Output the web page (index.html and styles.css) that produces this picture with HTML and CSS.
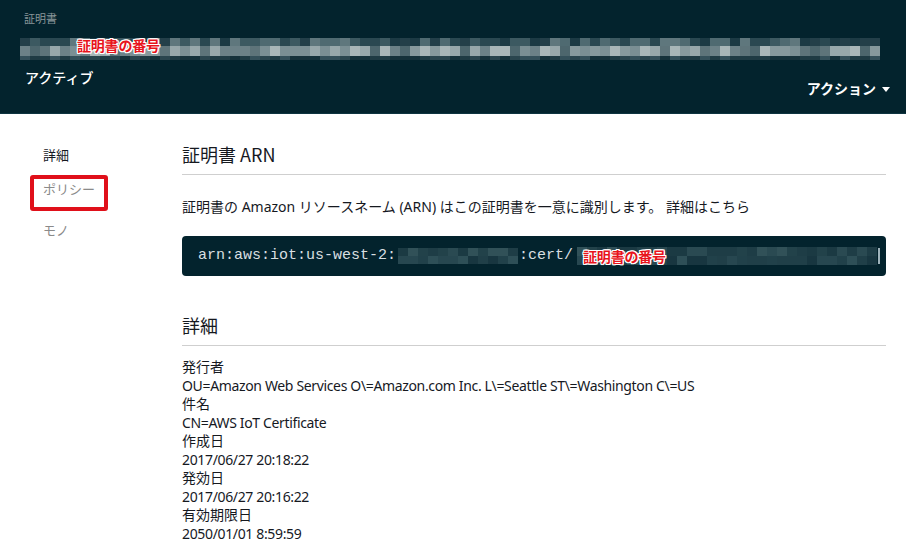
FILE: index.html
```html
<!DOCTYPE html>
<html lang="ja">
<head>
<meta charset="utf-8">
<title>証明書</title>
<link rel="stylesheet" href="styles.css">
</head>
<body>
<header class="header">
  <div class="crumb">証明書</div>
  <div class="mosaic-wrap">
    <div class="mosaic header-mosaic" data-cols="86" data-rows="8,10,4" data-seed="7" data-pal="header"></div>
    <span class="redlabel header-label">証明書の番号</span>
  </div>
  <div class="title-row">
    <div class="status">アクティブ</div>
    <div class="actions">アクション <span class="caret"></span></div>
  </div>
</header>
<div class="page">
  <nav class="side">
    <a class="side-item active">詳細</a>
    <a class="side-item boxed">ポリシー</a>
    <a class="side-item">モノ</a>
  </nav>
  <main class="main">
    <section class="sec">
      <h2 class="sec-title">証明書 ARN</h2>
      <p class="desc">証明書の Amazon リソースネーム (ARN) はこの証明書を一意に識別します。 詳細はこちら</p>
      <div class="code">
        <span class="code-text">arn:aws:iot:us-west-2:</span>
        <div class="mosaic code-mosaic1" data-cols="12" data-rows="8,8" data-seed="3" data-pal="code"></div>
        <span class="code-text">:cert/</span>
        <div class="mosaic-wrap code-wrap2">
          <div class="mosaic code-mosaic2" data-cols="30" data-rows="9,9" data-seed="11" data-pal="code"></div>
          <span class="redlabel code-label">証明書の番号</span>
        </div>
        <span class="cursor"></span>
      </div>
    </section>
    <section class="sec sec2">
      <h2 class="sec-title">詳細</h2>
      <dl class="details">
        <dt>発行者</dt>
        <dd>OU=Amazon Web Services O\=Amazon.com Inc. L\=Seattle ST\=Washington C\=US</dd>
        <dt>件名</dt>
        <dd>CN=AWS IoT Certificate</dd>
        <dt>作成日</dt>
        <dd>2017/06/27 20:18:22</dd>
        <dt>発効日</dt>
        <dd>2017/06/27 20:16:22</dd>
        <dt>有効期限日</dt>
        <dd>2050/01/01 8:59:59</dd>
      </dl>
    </section>
  </main>
</div>
<script src="script.js"></script>
</body>
</html>
```

FILE: styles.css
```css
* { box-sizing: border-box; }
html, body { margin: 0; padding: 0; }
body {
  width: 906px;
  height: 546px;
  overflow: hidden;
  background: #ffffff;
  font-family: "Noto Sans", "Noto Sans CJK JP", sans-serif;
  color: #16191f;
}
.header {
  height: 114px;
  background: #03232d;
  border-bottom: 1px solid #0e3440;
  padding: 12px 16px 0 20px;
  color: #ffffff;
}
.crumb {
  font-size: 11px;
  line-height: 14px;
  color: #8a969a;
  padding-left: 4px;
}
.mosaic-wrap {
  position: relative;
  flex: none;
}
.header .mosaic-wrap {
  margin-top: 12px;
  width: 860px;
}
.mosaic {
  display: flex;
  flex-direction: column;
  flex: none;
}
.mosaic .mrow { display: flex; }
.mosaic .mcell { width: 10px; flex: none; }
.redlabel {
  position: absolute;
  font-family: "Noto Sans CJK JP", sans-serif;
  font-weight: 700;
  font-size: 14px;
  line-height: 16px;
  color: #e8141c;
  letter-spacing: -0.2px;
  white-space: nowrap;
  text-shadow: 1px 0 0 #fff, -1px 0 0 #fff, 0 1px 0 #fff, 0 -1px 0 #fff,
    1px 1px 0 #fff, -1px -1px 0 #fff, 1px -1px 0 #fff, -1px 1px 0 #fff;
}
.header-label { left: 57px; top: -1px; }
.title-row {
  display: flex;
  justify-content: space-between;
  align-items: flex-start;
  margin-top: 7px;
}
.status {
  font-family: "Noto Sans CJK JP", sans-serif;
  font-size: 14px;
  line-height: 20px;
  padding-left: 5px;
  font-weight: 500;
}
.actions {
  font-family: "Noto Sans CJK JP", sans-serif;
  font-size: 14px;
  line-height: 20px;
  font-weight: 700;
  margin-top: 11px;
  display: flex;
  align-items: center;
  gap: 6px;
}
.caret {
  width: 0;
  height: 0;
  border-left: 4px solid transparent;
  border-right: 4px solid transparent;
  border-top: 5px solid #ffffff;
  margin-top: 2px;
}
.page {
  display: grid;
  grid-template-columns: 182px 704px;
}
.side {
  display: flex;
  flex-direction: column;
  padding: 32px 0 0 30px;
}
.side-item {
  font-family: "Noto Sans CJK JP", sans-serif;
  font-size: 13px;
  line-height: 18px;
  color: #8a8a8a;
  padding: 0 0 0 13px;
  height: 18px;
}
.side-item.active { color: #16191f; }
.side-item.boxed {
  width: 78px;
  height: 36px;
  border: 4px solid #e0101a;
  border-radius: 3px;
  padding: 0 0 0 9px;
  line-height: 19px;
  margin-top: 11px;
  color: #8a8a8a;
}
.side-item.boxed + .side-item { margin-top: 10px; }
.main {
  padding-top: 28px;
}
.sec-title {
  margin: 0;
  font-family: "Noto Sans CJK JP", sans-serif;
  font-weight: 400;
  font-size: 18px;
  line-height: 24px;
  padding-bottom: 8px;
  border-bottom: 1px solid #cfcfcf;
  color: #16191f;
}
.desc {
  margin: 22px 0 0;
  font-size: 14px;
  line-height: 20px;
  white-space: nowrap;
}
.code {
  margin-top: 19px;
  height: 40px;
  background: #03232d;
  border-radius: 4px;
  display: flex;
  align-items: center;
  padding-left: 16px;
  overflow: hidden;
}
.code-text {
  font-family: "Liberation Mono", "DejaVu Sans Mono", monospace;
  font-size: 15px;
  color: #d8dfe0;
  line-height: 18px;
  white-space: nowrap;
  flex: none;
}
.code-mosaic1 { margin: 0 1px 0 2px; }
.code-wrap2 { margin-left: 4px; }
.code-label { left: 6px; top: 1px; }
.cursor {
  width: 2px;
  height: 16px;
  background: #9fb3bb;
  flex: none;
  margin-left: 1px;
}
.sec2 { margin-top: 37px; }
.details {
  margin: 12px 0 0;
  font-size: 14px;
  line-height: 18.5px;
}
.details dt, .details dd {
  margin: 0;
}
.details dd {
  letter-spacing: -0.35px;
  white-space: nowrap;
}
```

FILE: script.js
```js
(function () {
  var palettes = {
    header: [
      ["#1c3a44", "#2a4851", "#3c5961", "#4f6a71", "#5f777d", "#233f49"],
      ["#5e747a", "#7b8f94", "#98a8ab", "#a9b6b8", "#6c8187", "#87999d", "#4d666d"],
      ["#15313a", "#1f3b44", "#2a454e", "#34505a"]
    ],
    code: [
      ["#1b3a43", "#22424a", "#2a4a52", "#315158", "#1e3d46"],
      ["#183640", "#203f48", "#274750", "#2e4f57", "#21414a"]
    ]
  };
  var seedState = 1;
  function rnd() {
    seedState = (seedState * 9301 + 49297) % 233280;
    return seedState / 233280;
  }
  var els = document.querySelectorAll('.mosaic');
  for (var i = 0; i < els.length; i++) {
    var el = els[i];
    var cols = parseInt(el.getAttribute('data-cols'), 10);
    var rows = el.getAttribute('data-rows').split(',');
    seedState = parseInt(el.getAttribute('data-seed'), 10) * 977;
    var pal = palettes[el.getAttribute('data-pal')];
    for (var r = 0; r < rows.length; r++) {
      var row = document.createElement('div');
      row.className = 'mrow';
      row.style.height = rows[r] + 'px';
      var p = pal[Math.min(r, pal.length - 1)];
      for (var c = 0; c < cols; c++) {
        var cell = document.createElement('div');
        cell.className = 'mcell';
        cell.style.background = p[Math.floor(rnd() * p.length)];
        row.appendChild(cell);
      }
      el.appendChild(row);
    }
  }
})();
```
